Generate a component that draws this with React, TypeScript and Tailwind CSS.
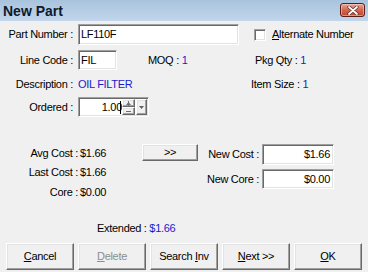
import React from "react";

const sunken =
  "bg-white border border-t-[#a0a0a0] border-l-[#a0a0a0] border-b-[#ffffff] border-r-[#ffffff] shadow-[inset_1px_1px_0_#696969,inset_-1px_-1px_0_#e3e3e3]";
const raised =
  "bg-[#f0f0f0] border border-t-[#ffffff] border-l-[#ffffff] border-b-[#696969] border-r-[#696969] shadow-[inset_-1px_-1px_0_#a0a0a0,inset_1px_1px_0_#e3e3e3]";

function Btn({ children, disabled }: { children: React.ReactNode; disabled?: boolean }) {
  return (
    <div
      className={`${raised} w-[68px] h-[27px] flex items-center justify-center ${
        disabled ? "text-[#8d8d8d]" : "text-black"
      }`}
    >
      <span>{children}</span>
    </div>
  );
}

export default function App() {
  return (
    <div
      className="w-[368px] h-[272px] bg-[#f0f0f0] overflow-hidden text-[11px] text-black leading-none tracking-[-0.3px] whitespace-nowrap"
      style={{ fontFamily: '"Liberation Sans", Arial, sans-serif' }}
    >
      {/* Title bar */}
      <div className="h-[21px] flex items-center justify-between bg-gradient-to-b from-[#a9c3de] to-[#c2d6ec]">
        <span className="ml-[3px] text-[14px] font-bold tracking-normal text-[#0f1a2a]">New Part</span>
        <div className="mr-[3px] mt-[-1px] w-[25px] h-[14px] rounded-[3px] border border-[#5c1d14] bg-gradient-to-b from-[#e9a795] via-[#d2664f] to-[#c2452c] flex items-center justify-center shadow-[inset_0_0_0_1px_rgba(255,220,210,0.5)]">
          <svg width="12" height="9" viewBox="0 0 12 9">
            <path d="M2 1 L10 8 M10 1 L2 8" stroke="#5a2a24" strokeWidth="3.2" strokeLinecap="round" />
            <path d="M2 1 L10 8 M10 1 L2 8" stroke="#ffffff" strokeWidth="1.8" strokeLinecap="round" />
          </svg>
        </div>
      </div>

      {/* Row 1 */}
      <div className="mt-[3px] h-[21px] flex items-center">
        <div className="w-[73px] text-right">Part Number :</div>
        <div className={`${sunken} ml-[5px] w-[161px] h-[21px] flex items-center pl-[2px]`}>LF110F</div>
        <div className={`${sunken} ml-[15px] w-[12px] h-[12px]`} />
        <div className="ml-[6px]">
          <span className="underline">A</span>lternate Number
        </div>
      </div>

      {/* Row 2 */}
      <div className="mt-[5px] h-[20px] flex items-center">
        <div className="w-[73px] text-right">Line Code :</div>
        <div className={`${sunken} ml-[5px] w-[39px] h-[20px] flex items-center pl-[2px]`}>FIL</div>
        <div className="ml-[31px] w-[107px]">
          MOQ : <span className="text-[#1a1acc]">1</span>
        </div>
        <div>
          Pkg Qty : <span className="text-[#1a1acc]">1</span>
        </div>
      </div>

      {/* Row 3 */}
      <div className="mt-[4px] h-[20px] flex items-center">
        <div className="w-[73px] text-right">Description :</div>
        <div className="ml-[5px] w-[173px] text-[#1a1acc]">OIL FILTER</div>
        <div>
          Item Size : <span className="text-[#1a1acc]">1</span>
        </div>
      </div>

      {/* Row 4 */}
      <div className="mt-[3px] h-[20px] flex items-center">
        <div className="w-[73px] text-right">Ordered :</div>
        <div className={`${sunken} ml-[5px] h-[20px] w-[71px] flex items-stretch p-[1px]`}>
          <div className="flex-1 flex items-center justify-end pr-[1px] bg-white">
            <span>1.00</span>
            <span className="inline-block w-[1px] h-[13px] bg-black ml-[-2px]" />
          </div>
          <div className="w-[13px] flex flex-col">
            <div className={`${raised} flex-1 flex items-center justify-center`}>
              <svg width="5" height="5" viewBox="0 0 5 5">
                <path d="M0 4 L2.5 1 L5 4 Z M2 0 h1 v5 h-1 Z" fill="#707070" />
              </svg>
            </div>
            <div className={`${raised} flex-1 flex items-center justify-center`}>
              <svg width="5" height="3" viewBox="0 0 5 3">
                <rect x="0" y="1" width="5" height="1" fill="#707070" />
              </svg>
            </div>
          </div>
          <div className={`${raised} w-[11px] ml-[1px] flex items-center justify-center`}>
            <svg width="5" height="3" viewBox="0 0 5 3">
              <path d="M0 0 L5 0 L2.5 3 Z" fill="#606060" />
            </svg>
          </div>
        </div>
      </div>

      {/* Costs */}
      <div className="mt-[26px] flex">
        <div className="w-[142px] flex flex-col">
          <div className="h-[20px] flex items-center">
            <div className="w-[78px] text-right">Avg Cost :</div>
            <div className="ml-[2px]">$1.66</div>
          </div>
          <div className="h-[19px] flex items-center">
            <div className="w-[78px] text-right">Last Cost :</div>
            <div className="ml-[2px]">$1.66</div>
          </div>
          <div className="h-[20px] flex items-center">
            <div className="w-[78px] text-right">Core :</div>
            <div className="ml-[2px]">$0.00</div>
          </div>
        </div>
        <div className={`${raised} mt-[1px] w-[56px] h-[17px] flex items-center justify-center`}>&gt;&gt;</div>
        <div className="ml-[9px] flex flex-col">
          <div className="mt-[1px] h-[21px] flex items-center">
            <div className="w-[52px] text-right">New Cost :</div>
            <div className={`${sunken} ml-[3px] w-[72px] h-[21px] flex items-center justify-end pr-[3px]`}>$1.66</div>
          </div>
          <div className="mt-[4px] h-[20px] flex items-center">
            <div className="w-[52px] text-right">New Core :</div>
            <div className={`${sunken} ml-[3px] w-[72px] h-[20px] flex items-center justify-end pr-[3px]`}>$0.00</div>
          </div>
        </div>
      </div>

      {/* Extended */}
      <div className="mt-[16px] h-[20px] flex items-center">
        <div className="ml-[97px]">
          Extended : <span className="text-[#1a1acc]">$1.66</span>
        </div>
      </div>

      {/* Buttons */}
      <div className="mt-[5px] ml-[6px] flex gap-[4px]">
        <Btn>
          <span className="underline">C</span>ancel
        </Btn>
        <Btn disabled>
          <span className="underline">D</span>elete
        </Btn>
        <Btn>
          Search <span className="underline">I</span>nv
        </Btn>
        <Btn>
          <span className="underline">N</span>ext &gt;&gt;
        </Btn>
        <Btn>
          <span className="underline">O</span>K
        </Btn>
      </div>
    </div>
  );
}
